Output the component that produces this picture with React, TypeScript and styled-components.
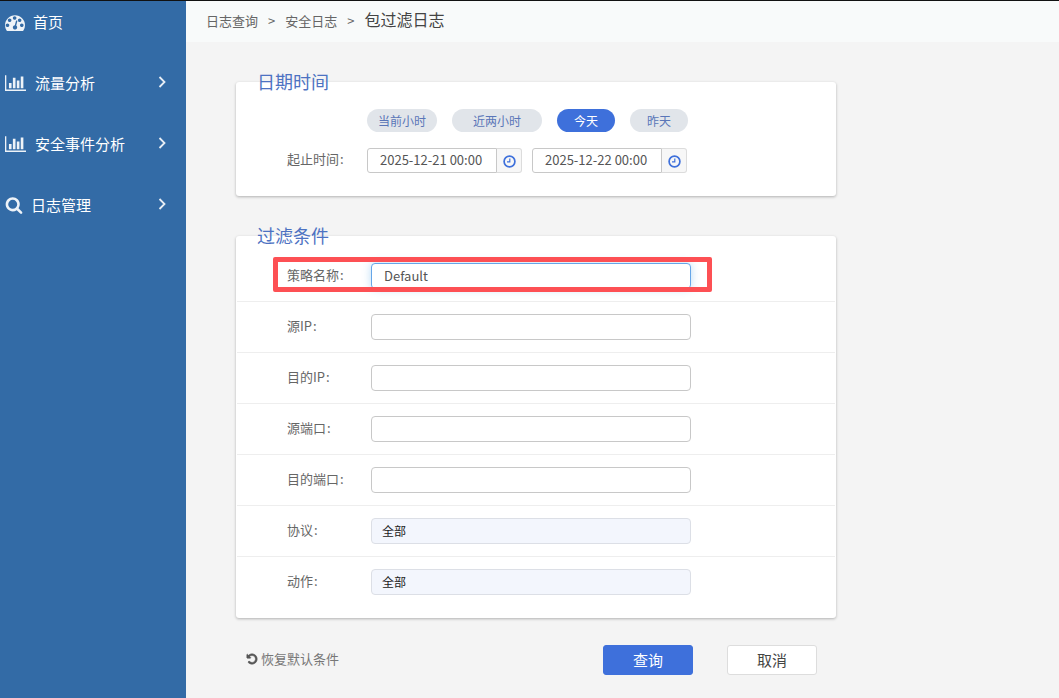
import React from 'react';
import styled, { createGlobalStyle } from 'styled-components';

const GlobalStyle = createGlobalStyle`
  html, body {
    margin: 0;
    padding: 0;
    height: 100%;
    overflow: hidden;
    background: #f4f4f4;
  }
  * {
    box-sizing: border-box;
  }
  body, input, select, button {
    font-family: "Noto Sans CJK SC", "Noto Sans", sans-serif;
  }
`;

const Shell = styled.div`
  display: flex;
  height: 698px;
  border-top: 1px solid #111;
`;

const Sidebar = styled.nav`
  width: 186px;
  flex: none;
  background: #336ba6;
  display: flex;
  flex-direction: column;
  gap: 19px;
  padding-right: 20px;
`;

const NavItem = styled.div`
  height: 42px;
  display: flex;
  align-items: center;
  padding-left: 5px;
  color: #fff;
  font-size: 15px;
  cursor: pointer;
`;

const NavIcon = styled.svg<{ $w: number }>`
  width: ${(p) => p.$w}px;
  height: 20px;
  flex: none;
  fill: #eef3f8;
`;

const NavLabel = styled.span<{ $gap: number }>`
  margin-left: ${(p) => p.$gap}px;
  margin-bottom: 2px;
  flex: 1;
`;

const Chevron = styled.svg`
  width: 8px;
  height: 12px;
  margin-top: -3px;
  fill: none;
  stroke: #e8eef5;
  stroke-width: 1.8;
`;

const Main = styled.main`
  flex: 1;
  display: flex;
  flex-direction: column;
`;

const Crumbs = styled.header`
  height: 41px;
  background: #f8fafa;
  padding: 0 0 3px 20px;
  display: flex;
  align-items: center;
  font-size: 13px;
  color: #666;
`;

const CrumbSep = styled.span`
  margin: 0 10px;
  font-size: 13px;
`;

const CrumbCurrent = styled.span`
  font-size: 16px;
  color: #444;
  margin-top: -2px;
`;

const Content = styled.div`
  width: 600px;
  margin: 40px 0 0 50px;
  display: flex;
  flex-direction: column;
  gap: 40px;
`;

const Card = styled.section`
  background: #fff;
  border-radius: 3px;
  box-shadow: 0 1px 3px rgba(0, 0, 0, 0.28);
`;

const CardTitle = styled.h3`
  margin: 0;
  margin-top: -12px;
  padding-left: 21px;
  height: 24px;
  line-height: 22px;
  font-size: 18px;
  font-weight: 400;
  color: #4d72c2;
`;

const TimeBody = styled.div`
  padding: 15px 0 23px 51px;
  display: flex;
  flex-direction: column;
  gap: 16px;
`;

const PillRow = styled.div`
  display: flex;
  gap: 15px;
  margin-left: 80px;
`;

const Pill = styled.button<{ $w: number; $active?: boolean }>`
  width: ${(p) => p.$w}px;
  height: 23px;
  padding: 0;
  border: 0;
  border-radius: 12px;
  font-size: 12px;
  background: ${(p) => (p.$active ? '#3e70db' : '#e1e5ea')};
  color: ${(p) => (p.$active ? '#fff' : '#5a76b8')};
`;

const DateRow = styled.div`
  display: flex;
  align-items: center;
`;

const FieldLabel = styled.label<{ $w: number }>`
  width: ${(p) => p.$w}px;
  flex: none;
  font-size: 13px;
  color: #666;
  margin-bottom: 4px;
  &::after {
    content: ':';
    margin-left: 1px;
  }
`;

const DateGroup = styled.div`
  display: flex;
  height: 25px;
  margin-right: 10px;
`;

const DateInput = styled.input`
  width: 130px;
  height: 25px;
  border: 1px solid #c8c8c8;
  border-radius: 3px 0 0 3px;
  padding: 0 0 3px 12px;
  font-size: 13px;
  color: #555;
  background: #fff;
  outline: none;
`;

const DateAddon = styled.span`
  width: 25px;
  border: 1px solid #dcdcdc;
  border-left: 0;
  border-radius: 0 3px 3px 0;
  background: #f7f7f7;
  display: flex;
  align-items: center;
  justify-content: center;
  padding-top: 2px;
`;

const ClockIcon = styled.svg`
  width: 13px;
  height: 13px;
  fill: none;
  stroke: #3e70db;
`;

const FilterBody = styled.div`
  margin-top: 3px;
  padding-bottom: 10px;
`;

const FilterRow = styled.div`
  position: relative;
  height: 51px;
  padding-left: 50px;
  display: flex;
  align-items: center;
  border-bottom: 1px solid #eeeeee;
  margin-left: 1px;
  margin-right: 1px;
  &:last-child {
    border-bottom: 1px solid transparent;
  }
`;

const TextInput = styled.input<{ $focused?: boolean }>`
  width: 320px;
  height: 26px;
  border-radius: 4px;
  padding: 0 12px 2px;
  font-size: 13px;
  color: #555;
  background: #fff;
  outline: none;
  border: 1px solid ${(p) => (p.$focused ? '#66a6e8' : '#c8c8c8')};
  box-shadow: ${(p) => (p.$focused ? '0 0 8px rgba(102, 175, 233, 0.45)' : 'none')};
`;

const SelectBox = styled.select`
  width: 320px;
  height: 26px;
  border-radius: 4px;
  border: 1px solid #dcdfe6;
  background: #f3f6fd;
  padding: 0 0 2px 10px;
  font-size: 12px;
  color: #222;
  appearance: none;
  outline: none;
`;

const Highlight = styled.div`
  position: absolute;
  left: 36px;
  top: 6px;
  width: 439px;
  height: 35px;
  border: 5px solid #fd5054;
  border-radius: 2px;
  pointer-events: none;
`;

const Actions = styled.div`
  display: flex;
  align-items: center;
  justify-content: space-between;
  margin-top: -13px;
  padding: 0 19px 0 10px;
`;

const ResetLink = styled.a`
  display: flex;
  align-items: center;
  gap: 3px;
  font-size: 13px;
  color: #777;
  cursor: pointer;
  margin-top: -4px;
`;

const ResetIcon = styled.svg`
  width: 12px;
  height: 12px;
  margin-top: 2px;
  fill: #555;
  stroke: #555;
  stroke-width: 90;
`;

const ButtonGroup = styled.div`
  display: flex;
  gap: 34px;
`;

const ActionButton = styled.button<{ $primary?: boolean }>`
  width: 90px;
  height: 30px;
  padding: 0 0 2px;
  border-radius: 3px;
  font-size: 15px;
  border: 1px solid ${(p) => (p.$primary ? '#3e70db' : '#dddddd')};
  background: ${(p) => (p.$primary ? '#3e70db' : '#fff')};
  color: ${(p) => (p.$primary ? '#fff' : '#444')};
`;

const dashboardPath =
  'M384 1184q0-66-47-113t-113-47-113 47-47 113 47 113 113 47 113-47 47-113zm192-448q0-66-47-113t-113-47-113 47-47 113 47 113 113 47 113-47 47-113zm428 480l101-382q6-26-7.5-48.5t-38.5-29.5-48 6.5-30 39.5l-101 382q-60 5-107 43.5t-63 98.5q-20 77 20 146t117 89 146-20 89-117q16-60-6-117t-72-91zm660-32q0-66-47-113t-113-47-113 47-47 113 47 113 113 47 113-47 47-113zm-640-640q0-66-47-113t-113-47-113 47-47 113 47 113 113 47 113-47 47-113zm448 192q0-66-47-113t-113-47-113 47-47 113 47 113 113 47 113-47 47-113zm320 448q0 261-141 483-19 29-54 29h-1402q-35 0-54-29-141-221-141-483 0-182 71-348t191-286 286-191 348-71 348 71 286 191 191 286 71 348z';
const chartPath =
  'M640 896v512h-256v-512h256zm384-512v1024h-256v-1024h256zm1024 1152v128h-2048v-1536h128v1408h1920zm-640-896v768h-256v-768h256zm384-384v1152h-256v-1152h256z';
const undoPath =
  'M1664 896q0 156-61 298t-164 245-245 164-298 61q-172 0-327-72.5t-264-204.5q-7-10-6.5-22.5t8.5-20.5l137-138q10-9 25-9 16 2 23 12 73 95 179 147t225 52q104 0 198.5-40.5t163.5-109.5 109.5-163.5 40.5-198.5-40.5-198.5-109.5-163.5-163.5-109.5-198.5-40.5q-98 0-188 35.5t-160 101.5l137 138q31 30 14 69-17 40-59 40h-448q-26 0-45-19t-19-45v-448q0-42 40-59 39-17 69 14l130 129q107-101 244.5-156.5t284.5-55.5q156 0 298 61t245 164 164 245 61 298z';
const searchPath =
  'M1216 832q0-185-131.500-316.500t-316.500-131.500-316.500 131.500-131.500 316.500 131.500 316.500 316.500 131.500 316.500-131.500 131.500-316.500zm512 832q0 52-38 90t-90 38q-54 0-90-38l-343-342q-179 124-399 124-143 0-273.500-55.500t-225-150-150-225-55.500-273.500 55.500-273.500 150-225 225-150 273.500-55.500 273.500 55.500 225 150 150 225 55.500 273.500q0 220-124 399l343 343q37 37 37 90z';

const navItems = [
  { label: '首页', d: dashboardPath, box: '0 0 1792 1792', w: 20, gap: 8, arrow: false },
  { label: '流量分析', d: chartPath, box: '0 0 2048 1792', w: 21, gap: 9, arrow: true },
  { label: '安全事件分析', d: chartPath, box: '0 0 2048 1792', w: 21, gap: 9, arrow: true },
  { label: '日志管理', d: searchPath, box: '0 0 1792 1792', w: 18, gap: 8, arrow: true },
];

const filters = ['源IP', '目的IP', '源端口', '目的端口'];

const Clock = () => (
  <ClockIcon viewBox="0 0 13 13">
    <circle cx="6.5" cy="6.5" r="5.4" strokeWidth="1.7" />
    <path d="M6.8 3.4v3.4H4" strokeWidth="1.2" />
  </ClockIcon>
);

const App = () => (
  <>
    <GlobalStyle />
    <Shell>
      <Sidebar>
        {navItems.map((item) => (
          <NavItem key={item.label}>
            <NavIcon $w={item.w} viewBox={item.box} preserveAspectRatio="xMidYMid meet">
              <path d={item.d} />
            </NavIcon>
            <NavLabel $gap={item.gap}>{item.label}</NavLabel>
            {item.arrow && (
              <Chevron viewBox="0 0 8 12">
                <path d="M1.500 1l5 5-5 5" />
              </Chevron>
            )}
          </NavItem>
        ))}
      </Sidebar>
      <Main>
        <Crumbs>
          <span>日志查询</span>
          <CrumbSep>&gt;</CrumbSep>
          <span>安全日志</span>
          <CrumbSep>&gt;</CrumbSep>
          <CrumbCurrent>包过滤日志</CrumbCurrent>
        </Crumbs>
        <Content>
          <Card>
            <CardTitle>日期时间</CardTitle>
            <TimeBody>
              <PillRow>
                <Pill $w={70}>当前小时</Pill>
                <Pill $w={90}>近两小时</Pill>
                <Pill $w={58} $active>今天</Pill>
                <Pill $w={58}>昨天</Pill>
              </PillRow>
              <DateRow>
                <FieldLabel $w={80}>起止时间</FieldLabel>
                <DateGroup>
                  <DateInput defaultValue="2025-12-21 00:00" />
                  <DateAddon><Clock /></DateAddon>
                </DateGroup>
                <DateGroup>
                  <DateInput defaultValue="2025-12-22 00:00" />
                  <DateAddon><Clock /></DateAddon>
                </DateGroup>
              </DateRow>
            </TimeBody>
          </Card>
          <Card>
            <CardTitle>过滤条件</CardTitle>
            <FilterBody>
              <FilterRow>
                <FieldLabel $w={84}>策略名称</FieldLabel>
                <TextInput $focused defaultValue="Default" />
                <Highlight />
              </FilterRow>
              {filters.map((label) => (
                <FilterRow key={label}>
                  <FieldLabel $w={84}>{label}</FieldLabel>
                  <TextInput />
                </FilterRow>
              ))}
              <FilterRow>
                <FieldLabel $w={84}>协议</FieldLabel>
                <SelectBox><option>全部</option></SelectBox>
              </FilterRow>
              <FilterRow>
                <FieldLabel $w={84}>动作</FieldLabel>
                <SelectBox><option>全部</option></SelectBox>
              </FilterRow>
            </FilterBody>
          </Card>
          <Actions>
            <ResetLink>
              <ResetIcon viewBox="0 0 1792 1792"><path d={undoPath} /></ResetIcon>
              恢复默认条件
            </ResetLink>
            <ButtonGroup>
              <ActionButton $primary>查询</ActionButton>
              <ActionButton>取消</ActionButton>
            </ButtonGroup>
          </Actions>
        </Content>
      </Main>
    </Shell>
  </>
);

export default App;
